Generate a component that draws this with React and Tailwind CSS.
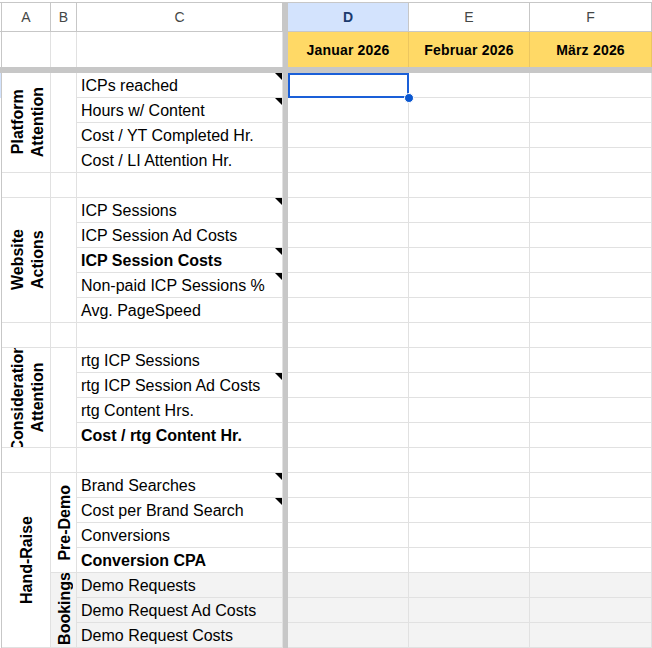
const sans = { fontFamily: '"Liberation Sans", Arial, sans-serif' };

const rows = [
  { label: "ICPs reached", note: true },
  { label: "Hours w/ Content", note: true },
  { label: "Cost / YT Completed Hr." },
  { label: "Cost / LI Attention Hr." },
  {},
  { label: "ICP Sessions", note: true },
  { label: "ICP Session Ad Costs" },
  { label: "ICP Session Costs", note: true, bold: true },
  { label: "Non-paid ICP Sessions %", note: true },
  { label: "Avg. PageSpeed" },
  {},
  { label: "rtg ICP Sessions" },
  { label: "rtg ICP Session Ad Costs", note: true },
  { label: "rtg Content Hrs." },
  { label: "Cost / rtg Content Hr.", bold: true },
  {},
  { label: "Brand Searches", note: true },
  { label: "Cost per Brand Search", note: true },
  { label: "Conversions" },
  { label: "Conversion CPA", bold: true },
  { label: "Demo Requests", gray: true },
  { label: "Demo Request Ad Costs", gray: true },
  { label: "Demo Request Costs", gray: true },
];

const line = "border-r border-b border-[#e1e1e1]";

const VerticalCell = ({ className, children }) => (
  <div className={`flex items-center justify-center overflow-hidden ${line} ${className}`}>
    <div className="[writing-mode:vertical-rl] rotate-180 whitespace-nowrap text-center text-[16px] font-bold leading-[20px] text-black">
      {children}
    </div>
  </div>
);

const App = () => {
  return (
    <div className="w-[652px] h-[648px] overflow-hidden bg-white pt-[2px] text-black" style={sans}>
      <div className="grid grid-cols-[2px_49px_26px_206px_5px_121px_121px_122px] grid-rows-[30px_35px_6px_repeat(23,25px)]">
        {/* column letters */}
        <div className="border-t border-b border-r border-[#c7c7c7]" />
        {["A", "B", "C"].map((c) => (
          <div key={c} className="flex items-center justify-center border-t border-r border-b border-[#c7c7c7] text-[14px] text-[#444746]">{c}</div>
        ))}
        <div className="row-span-full col-start-5 row-start-1 bg-[#c7c7c7]" />
        <div className="flex items-center justify-center border-t border-r border-b border-[#c7c7c7] bg-[#d3e3fd] text-[14px] font-bold text-[#1b3a6e]">D</div>
        {["E", "F"].map((c) => (
          <div key={c} className="flex items-center justify-center border-t border-r border-b border-[#c7c7c7] text-[14px] text-[#444746]">{c}</div>
        ))}

        {/* month row */}
        <div className="col-start-1 border-r border-[#c7c7c7]" />
        <div className="border-r border-[#e1e1e1]" />
        <div className="border-r border-[#e1e1e1]" />
        <div className="border-r border-[#e1e1e1]" />
        {["Januar 2026", "Februar 2026", "März 2026"].map((m) => (
          <div key={m} className="flex items-center justify-center border-r border-[#ecc65f] bg-[#ffd966] pt-[1px] text-[14px] font-bold tracking-[0.2px]">{m}</div>
        ))}

        {/* freeze bar */}
        <div className="col-start-1 col-end-5 bg-[#c7c7c7]" />
        <div className="col-start-6 col-end-9 bg-[#c7c7c7]" />

        {/* left edge */}
        <div className="col-start-1 row-start-4 border-r border-[#c7c7c7] bg-[#d3e3fd]" />
        <div className="col-start-1 row-start-5 row-span-22 border-r border-[#c7c7c7]" />

        {/* merged labels */}
        <VerticalCell className="col-start-2 row-start-4 row-span-4 pl-[4px]">Platform<br />Attention</VerticalCell>
        <div className={`col-start-3 row-start-4 row-span-4 ${line}`} />
        <VerticalCell className="col-start-2 row-start-9 row-span-5 pl-[4px]">Website<br />Actions</VerticalCell>
        <div className={`col-start-3 row-start-9 row-span-5 ${line}`} />
        <VerticalCell className="col-start-2 row-start-15 row-span-4 pl-[4px]">Consideration<br />Attention</VerticalCell>
        <div className={`col-start-3 row-start-15 row-span-4 ${line}`} />
        <div className={`col-start-2 row-start-8 ${line}`} />
        <div className={`col-start-3 row-start-8 ${line}`} />
        <div className={`col-start-2 row-start-14 ${line}`} />
        <div className={`col-start-3 row-start-14 ${line}`} />
        <div className={`col-start-2 row-start-19 ${line}`} />
        <div className={`col-start-3 row-start-19 ${line}`} />
        <VerticalCell className="col-start-2 row-start-20 row-span-7 pl-[2px]">Hand-Raise</VerticalCell>
        <VerticalCell className="col-start-3 row-start-20 row-span-4 pl-[3px]">Pre-Demo</VerticalCell>
        <VerticalCell className="col-start-3 row-start-24 row-span-3 bg-[#f3f3f3] pl-[3px] pb-[4px]">Bookings</VerticalCell>

        {/* data rows */}
        {rows.map((r, i) => {
          const rowStyle = { gridRowStart: i + 4 };
          const bg = r.gray ? "bg-[#f3f3f3]" : "";
          return [
            <div key={`c${i}`} style={rowStyle} className={`col-start-4 relative flex items-center overflow-hidden whitespace-nowrap pl-[4px] pt-[1px] text-[16px] ${r.bold ? "font-bold" : ""} ${line} ${bg}`}>
              {r.label}
              {r.note && <span className="absolute top-0 right-0 border-l-[7px] border-t-[7px] border-l-transparent border-t-black" />}
            </div>,
            <div key={`d${i}`} style={rowStyle} className={`col-start-6 relative ${line} ${bg}`}>
              {i === 0 && (
                <span className="absolute top-0 left-0 -right-px -bottom-px border-2 border-[#1a5fd8] z-10">
                  <span className="absolute -right-[7px] -bottom-[7px] h-[10px] w-[10px] rounded-full border border-white bg-[#0b57d0]" />
                </span>
              )}
            </div>,
            <div key={`e${i}`} style={rowStyle} className={`col-start-7 ${line} ${bg}`} />,
            <div key={`f${i}`} style={rowStyle} className={`col-start-8 ${line} ${bg}`} />,
          ];
        })}
      </div>
    </div>
  );
};

export default App;
